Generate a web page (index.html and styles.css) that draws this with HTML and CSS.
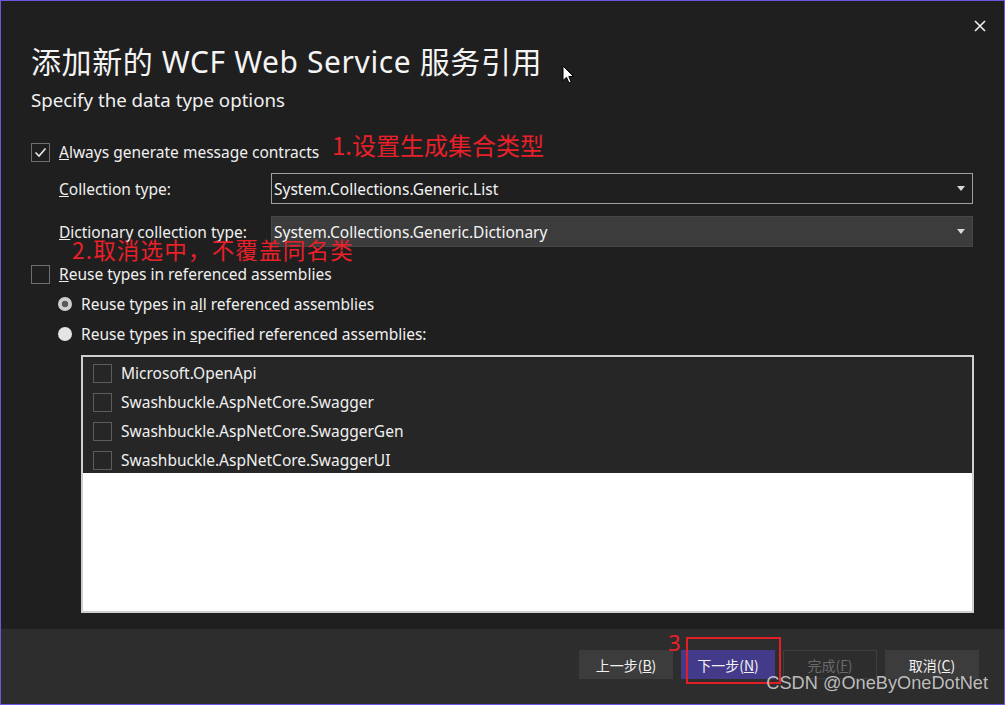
FILE: index.html
```html
<!DOCTYPE html>
<html lang="zh">
<head>
<meta charset="utf-8">
<title>添加新的 WCF Web Service 服务引用</title>
<link rel="stylesheet" href="styles.css">
</head>
<body>
<div class="dialog">
  <div class="main">
    <div class="titlebar">
      <button class="close" aria-label="Close">
        <svg width="12" height="12" viewBox="0 0 12 12"><path d="M1 1 L11 11 M11 1 L1 11" stroke="#f0f0f0" stroke-width="1.6" fill="none"/></svg>
      </button>
    </div>
    <h1 class="title">添加新的 WCF Web Service 服务引用</h1>
    <div class="subtitle">Specify the data type options</div>

    <div class="row check-row r-always">
      <span class="box checked">
        <svg width="13" height="11" viewBox="0 0 13 11"><path d="M1.5 5.5 L5 9 L11.5 1.5" stroke="#e8e8e8" stroke-width="1.6" fill="none"/></svg>
      </span>
      <span class="label"><u>A</u>lways generate message contracts</span>
      <span class="note note1">1.设置生成集合类型</span>
    </div>

    <div class="row field-row r-coll">
      <span class="field-label"><u>C</u>ollection type:</span>
      <div class="select">
        <span>System.Collections.Generic.List</span>
        <span class="caret"></span>
      </div>
    </div>

    <div class="row field-row r-dict">
      <span class="field-label"><u>D</u>ictionary collection type:</span>
      <div class="select filled">
        <span>System.Collections.Generic.Dictionary</span>
        <span class="caret"></span>
      </div>
      <span class="note note2">2.取消选中，不覆盖同名类</span>
    </div>

    <div class="row check-row r-reuse">
      <span class="box"></span>
      <span class="label"><u>R</u>euse types in referenced assemblies</span>
    </div>

    <div class="row radio-row r-radio1">
      <span class="radio on"></span>
      <span class="label">Reuse types in a<u>l</u>l referenced assemblies</span>
    </div>
    <div class="row radio-row r-radio2">
      <span class="radio"></span>
      <span class="label">Reuse types in <u>s</u>pecified referenced assemblies:</span>
    </div>

    <div class="listbox">
      <div class="item"><span class="box small"></span><span>Microsoft.OpenApi</span></div>
      <div class="item"><span class="box small"></span><span>Swashbuckle.AspNetCore.Swagger</span></div>
      <div class="item"><span class="box small"></span><span>Swashbuckle.AspNetCore.SwaggerGen</span></div>
      <div class="item"><span class="box small"></span><span>Swashbuckle.AspNetCore.SwaggerUI</span></div>
      <div class="empty"></div>
    </div>

    <svg class="cursor" width="13" height="19" viewBox="0 0 13 19"><path d="M1 1 L1 15.5 L4.5 12.3 L7 18 L9.2 17 L6.8 11.5 L11.5 11.5 Z" fill="#ffffff" stroke="#000000" stroke-width="1"/></svg>
  </div>

  <div class="footer">
    <button class="btn">上一步(<u>B</u>)</button>
    <button class="btn primary">下一步(<u>N</u>)
      <span class="note3">3</span>
      <span class="redbox"></span>
    </button>
    <button class="btn disabled">完成(<u>F</u>)</button>
    <button class="btn">取消(<u>C</u>)</button>
    <span class="watermark">CSDN @OneByOneDotNet</span>
  </div>
</div>
</body>
</html>
```

FILE: styles.css
```css
html, body {
  margin: 0;
  padding: 0;
  background: #1f1f1f;
}
body {
  font-family: "Noto Sans", "Noto Sans CJK SC", sans-serif;
  color: #f0f0f0;
}
.dialog {
  width: 1005px;
  height: 705px;
  box-sizing: border-box;
  border: 1px solid #6a58e0;
  background: #1f1f1f;
  display: flex;
  flex-direction: column;
}
.main {
  flex: 1;
  position: relative;
  padding: 14px 30px 0 30px;
}
.titlebar {
  height: 22px;
  display: flex;
  justify-content: flex-end;
  margin-right: -17px;
}
.close {
  background: none;
  border: 0;
  padding: 0;
  width: 22px;
  height: 22px;
  display: flex;
  align-items: center;
  justify-content: center;
}
.title {
  margin: 5px 0 0 0;
  font-weight: normal;
  font-size: 30px;
  line-height: 40px;
  height: 40px;
  font-family: "Noto Sans", "Noto Sans CJK SC", sans-serif;
  color: #f4f4f4;
  letter-spacing: 0.6px;
  white-space: nowrap;
}
.subtitle {
  margin-top: 6px;
  font-size: 18.7px;
  line-height: 24px;
  height: 24px;
  color: #f0f0f0;
}
.row {
  display: flex;
  align-items: center;
  position: relative;
  font-size: 15.5px;
}
.check-row { height: 24px; }
.r-always { margin-top: 28px; }
.r-coll { margin-top: 9px; height: 31px; }
.r-dict { margin-top: 12px; height: 31px; }
.r-reuse { margin-top: 15px; }
.radio-row { height: 24px; margin-top: 6px; padding-left: 27px; }
.box {
  width: 17px;
  height: 17px;
  border: 1px solid #6e6e6e;
  box-sizing: content-box;
  display: flex;
  align-items: center;
  justify-content: center;
  flex: none;
}
.check-row .box { margin-right: 9px; }
.label { white-space: nowrap; }
.field-row { padding-left: 28px; }
.field-label {
  width: 212px;
  flex: none;
  white-space: nowrap;
}
.select {
  flex: none;
  width: 702px;
  height: 31px;
  box-sizing: border-box;
  border: 1px solid #a0a0a0;
  display: flex;
  align-items: center;
  justify-content: space-between;
  padding: 0 7px 0 2px;
  color: #f4f4f4;
}
.select.filled {
  background: #3c3c3c;
  border-color: #464646;
}
.caret {
  width: 0;
  height: 0;
  border-left: 4.5px solid transparent;
  border-right: 4.5px solid transparent;
  border-top: 5px solid #d8d8d8;
}
.radio {
  width: 14px;
  height: 14px;
  border-radius: 50%;
  background: #e4e4e4;
  margin-right: 9px;
  flex: none;
  box-sizing: border-box;
}
.radio.on {
  background: radial-gradient(circle, #5a5a5a 0 3px, #cfcfcf 3.6px);
}
.listbox {
  margin: 9px 0 0 50px;
  width: 893px;
  height: 258px;
  box-sizing: border-box;
  border: 2px solid #cfcfcf;
  background: #ffffff;
  display: flex;
  flex-direction: column;
}
.item {
  height: 29px;
  flex: none;
  box-sizing: border-box;
  padding-top: 3px;
  background: #262626;
  display: flex;
  align-items: center;
  padding-left: 10px;
  font-size: 15.5px;
  color: #f0f0f0;
}
.item .box {
  margin-right: 9px;
  border-color: #5c5c5c;
}
.listbox .empty { flex: 1; }
.note {
  position: absolute;
  color: #e8202a;
  font-family: "Noto Sans CJK SC", sans-serif;
  white-space: nowrap;
}
.note1 {
  left: 301px;
  top: -13px;
  font-size: 24px;
  letter-spacing: 0px;
}
.note2 {
  left: 41px;
  top: 17px;
  font-size: 22.5px;
  letter-spacing: 1.2px;
}
.cursor {
  position: absolute;
  left: 561px;
  top: 64px;
}
.footer {
  height: 75px;
  flex: none;
  background: #2d2d2d;
  display: flex;
  align-items: flex-start;
  justify-content: flex-end;
  padding: 21px 25px 0 0;
  box-sizing: border-box;
  gap: 8px;
  position: relative;
}
.btn {
  width: 94px;
  height: 29px;
  border: 1px solid #3c3c3c;
  background: #3c3c3c;
  color: #f2f2f2;
  font-family: "Noto Sans CJK SC", "Noto Sans", sans-serif;
  font-size: 14px;
  padding: 0;
  position: relative;
}
.btn.primary {
  background: #433a8a;
  border-color: #433a8a;
}
.btn.disabled {
  background: transparent;
  border-color: #3e3e3e;
  color: #6a6a6a;
}
.note3 {
  position: absolute;
  left: -14px;
  top: -22px;
  color: #e8202a;
  font-family: "Noto Sans", sans-serif;
  font-size: 22px;
  line-height: 26px;
}
.redbox {
  position: absolute;
  left: 4px;
  top: -14px;
  width: 95px;
  height: 47px;
  box-sizing: border-box;
  border: 2px solid #e21f26;
}
.watermark {
  position: absolute;
  right: 16px;
  top: 44px;
  font-family: "Liberation Sans", Arial, sans-serif;
  font-size: 18.2px;
  color: rgba(215, 215, 215, 0.85);
  white-space: nowrap;
}
```
